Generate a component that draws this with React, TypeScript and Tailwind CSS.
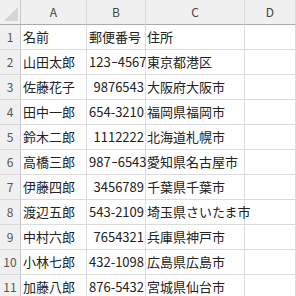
const cols = ['A', 'B', 'C', 'D'];

const rows: { name: string; zip: string; addr: string; num?: boolean }[] = [
  { name: '名前', zip: '郵便番号', addr: '住所' },
  { name: '山田太郎', zip: '123－4567', addr: '東京都港区' },
  { name: '佐藤花子', zip: '9876543', addr: '大阪府大阪市', num: true },
  { name: '田中一郎', zip: '654-3210', addr: '福岡県福岡市' },
  { name: '鈴木二郎', zip: '1112222', addr: '北海道札幌市', num: true },
  { name: '高橋三郎', zip: '987－6543', addr: '愛知県名古屋市' },
  { name: '伊藤四郎', zip: '3456789', addr: '千葉県千葉市', num: true },
  { name: '渡辺五郎', zip: '543-2109', addr: '埼玉県さいたま市' },
  { name: '中村六郎', zip: '7654321', addr: '兵庫県神戸市', num: true },
  { name: '小林七郎', zip: '432-1098', addr: '広島県広島市' },
  { name: '加藤八郎', zip: '876-5432', addr: '宮城県仙台市' },
];

const jp = "font-['Liberation_Sans_Narrow','Noto_Sans_CJK_JP',sans-serif]";

// full-width dash is drawn narrow, as Excel's font does
function Zip({ text }: { text: string }) {
  const parts = text.split('－');
  if (parts.length === 1) return <>{text}</>;
  return (
    <>
      {parts[0]}
      <span className="inline-block scale-x-[0.55] -mx-[3px]">－</span>
      {parts[1]}
    </>
  );
}

export default function App() {
  return (
    <div className={`w-[296px] h-[296px] overflow-hidden bg-white text-[13px] text-[#222] ${jp}`}>
      <div className="grid grid-cols-[21px_66px_59px_99px_51px] auto-rows-[25px]">
        {/* header row */}
        <div className="relative bg-[#f0f0f0] border-r border-b border-r-[#c8c8c8] border-b-[#ababab]">
          <div className="absolute right-[2px] bottom-[3px] w-0 h-0 border-l-[14px] border-l-transparent border-b-[14px] border-b-[#d4d4d4]" />
        </div>
        {cols.map((c) => (
          <div
            key={c}
            className="flex items-center justify-center bg-[#f0f0f0] border-r border-b border-r-[#dadada] border-b-[#ababab] text-[12px] text-[#444]"
          >
            {c}
          </div>
        ))}

        {rows.map((r, i) => (
          <div key={i} className="contents">
            <div className="flex items-center justify-center bg-[#f0f0f0] border-r border-b border-r-[#c8c8c8] border-b-[#dadada] text-[12px] text-[#555]">
              {i + 1}
            </div>
            <div className="flex items-center pl-[2px] border-r border-b border-[#dcdcdc] whitespace-nowrap">
              {r.name}
            </div>
            <div
              className={`flex items-center border-r border-b border-[#dcdcdc] whitespace-nowrap ${
                r.num ? 'justify-end pr-[1px]' : 'pl-[2px]'
              }`}
            >
              <Zip text={r.zip} />
            </div>
            <div className="flex items-center pl-[1px] border-r border-b border-[#dcdcdc] whitespace-nowrap">
              {r.addr}
            </div>
            <div className="border-r border-b border-[#dcdcdc]" />
          </div>
        ))}
      </div>
    </div>
  );
}
